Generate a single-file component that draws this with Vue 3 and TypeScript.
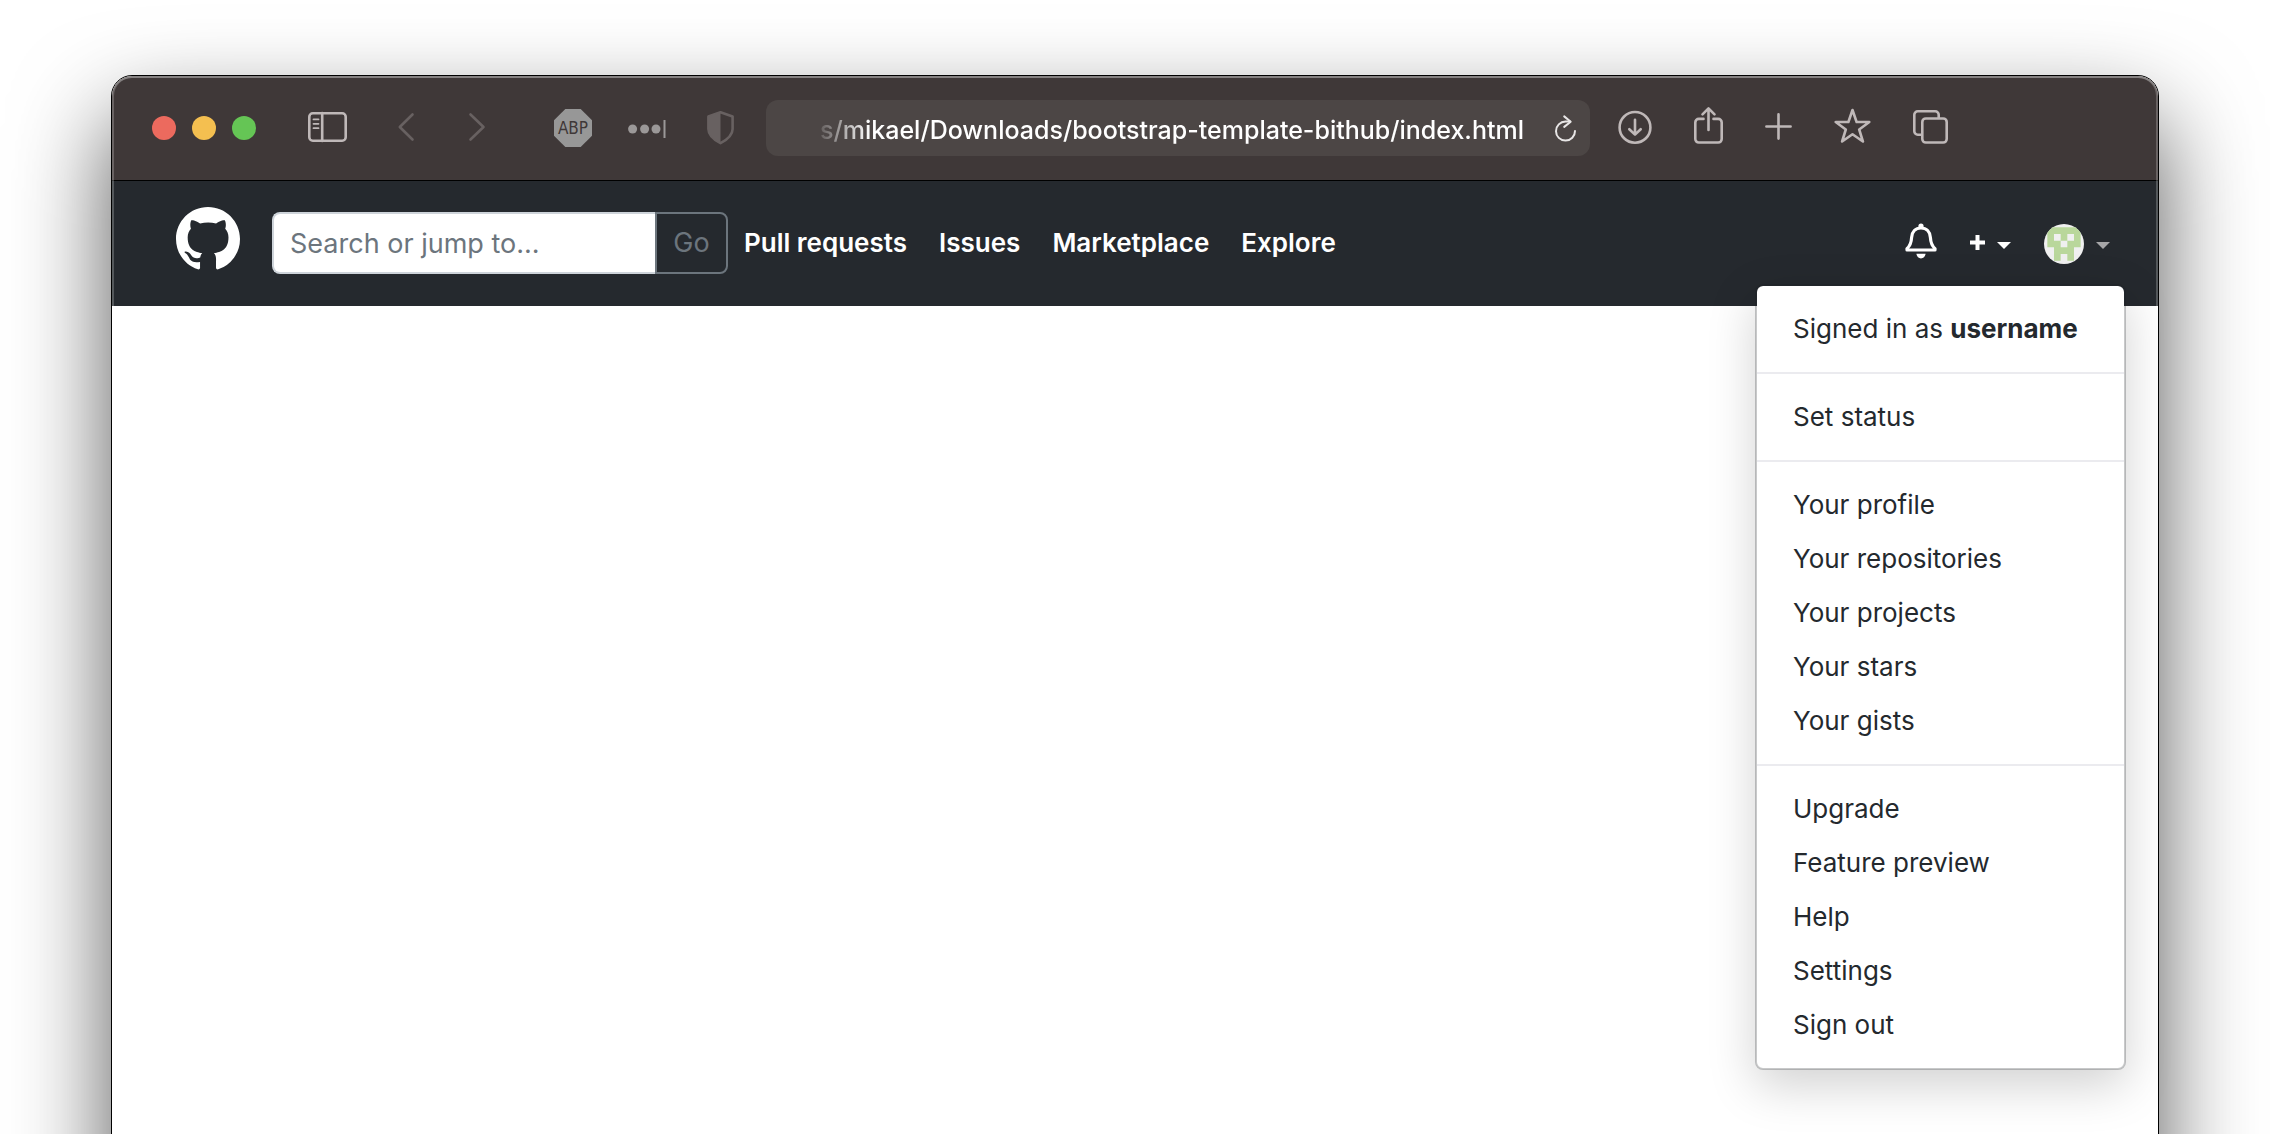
<script setup lang="ts">
import { ref } from 'vue'

interface MenuEntry {
  label: string
  strong?: string
}

const address = ref('s/mikael/Downloads/bootstrap-template-bithub/index.html')
const query = ref('')

const links: string[] = ['Pull requests', 'Issues', 'Marketplace', 'Explore']

const menu: MenuEntry[][] = [
  [{ label: 'Signed in as ', strong: 'username' }],
  [{ label: 'Set status' }],
  [
    { label: 'Your profile' },
    { label: 'Your repositories' },
    { label: 'Your projects' },
    { label: 'Your stars' },
    { label: 'Your gists' },
  ],
  [
    { label: 'Upgrade' },
    { label: 'Feature preview' },
    { label: 'Help' },
    { label: 'Settings' },
    { label: 'Sign out' },
  ],
]
</script>

<template>
  <div class="desktop">
    <div class="window">
      <div class="toolbar">
        <div class="lights">
          <button class="light close" aria-label="Close"></button>
          <button class="light minimise" aria-label="Minimise"></button>
          <button class="light zoom" aria-label="Zoom"></button>
        </div>

        <div class="history">
          <button class="tool" aria-label="Sidebar">
            <svg width="39" height="44" viewBox="0 0 39 44">
              <rect x="1.3" y="7.3" width="36.4" height="27.4" rx="3.5" />
              <path d="M14.2 7v28" />
              <path d="M5.5 13.4h5M5.5 17.8h5M5.5 22.2h5" stroke-width="1.8" />
            </svg>
          </button>
          <button class="tool dim" aria-label="Back">
            <svg width="20" height="44" viewBox="0 0 20 44"><path d="M15.5 8.500 2.800 21l12.700 12.500" /></svg>
          </button>
          <button class="tool dim" aria-label="Forward">
            <svg width="20" height="44" viewBox="0 0 20 44"><path d="M3.5 8.5 16.5 21l-13 12.5" /></svg>
          </button>
        </div>

        <div class="extensions">
          <button class="tool" aria-label="Adblock Plus">
            <svg width="38" height="44" viewBox="0 0 38 44">
              <path class="abp" d="M11.3 3h15.4L38 14.2v15.5L26.7 41H11.3L0 29.7V14.2z" />
              <text class="abp-text" x="19" y="28" text-anchor="middle">ABP</text>
            </svg>
          </button>
          <button class="tool" aria-label="Passwords">
            <svg width="43" height="44" viewBox="0 0 43 44">
              <g class="dots">
                <circle cx="4.6" cy="23" r="4.5" />
                <circle cx="16.6" cy="23" r="4.5" />
                <circle cx="28" cy="23" r="4.5" />
                <rect x="35.5" y="14" width="2" height="18" />
              </g>
            </svg>
          </button>
          <button class="tool dim" aria-label="Privacy report">
            <svg width="27" height="44" viewBox="0 0 27 44">
              <path d="M13.5 6.2 25.6 10.4V23c0 7-6 11-12.1 14.2C7.4 34 1.4 30 1.4 23V10.4z" />
              <path class="half" d="M13.5 6.2v31C7.4 34 1.4 30 1.4 23V10.4z" />
            </svg>
          </button>
        </div>

        <div class="address">
          <input v-model="address" class="address-field" type="text" aria-label="Address" spellcheck="false" />
          <button class="tool reload" aria-label="Reload">
            <svg width="24" height="28" viewBox="0 0 24 28">
              <path d="M16 7.600h-4.500A9.500 9.500 0 1 0 21 17" />
              <path d="m10.200 2.400 6.500 5.300-6.500 5.200" />
            </svg>
          </button>
        </div>

        <div class="actions">
          <button class="tool" aria-label="Downloads">
            <svg width="34" height="44" viewBox="0 0 34 44">
              <circle cx="17" cy="21.4" r="15.4" />
              <path d="M17 13.800v14.600M11.300 23.200l5.700 5.400 5.700-5.400" />
            </svg>
          </button>
          <button class="tool" aria-label="Share">
            <svg width="29" height="44" viewBox="0 0 29 44">
              <path d="M9.500 12.900H4.800a3.500 3.500 0 0 0-3.500 3.500V33a3.500 3.500 0 0 0 3.500 3.500h19.400a3.500 3.500 0 0 0 3.500-3.500V16.400a3.500 3.500 0 0 0-3.500-3.500h-4.700" />
              <path d="M14.500 3v21M8.500 8.400l6-6 6 6" />
            </svg>
          </button>
          <button class="tool" aria-label="New tab">
            <svg width="27" height="44" viewBox="0 0 27 44"><path d="M13.500 8.400v24.200M1.400 20.500h24.200" /></svg>
          </button>
          <button class="tool" aria-label="Bookmarks">
            <svg width="37" height="44" viewBox="0 0 37 44">
              <path d="m18.500 4 4.100 12h12.700l-10.100 7.500 3.700 12-10.400-7.200-10.400 7.200 3.700-12L1.700 16h12.700z" />
            </svg>
          </button>
          <button class="tool" aria-label="Tab overview">
            <svg width="35" height="44" viewBox="0 0 35 44">
              <rect x="9.3" y="12.5" width="24.4" height="24" rx="3.5" />
              <path d="M8.500 28.700H4.800a3.500 3.500 0 0 1-3.500-3.500V8.800a3.500 3.500 0 0 1 3.500-3.500h17.400a3.500 3.500 0 0 1 3.500 3.500v3" />
            </svg>
          </button>
        </div>
      </div>

      <header class="navbar">
        <a class="brand" href="#" aria-label="Home">
          <svg width="64" height="64" viewBox="0 0 16 16">
            <path d="M8 0C3.580 0 0 3.580 0 8c0 3.540 2.290 6.530 5.470 7.590.4.070.55-.170.55-.380 0-.190-.010-.820-.010-1.490-2.010.370-2.530-.490-2.690-.940-.090-.230-.480-.940-.820-1.130-.280-.150-.680-.520-.010-.530.630-.010 1.080.580 1.230.820.720 1.210 1.870.870 2.330.660.070-.520.280-.870.510-1.070-1.780-.200-3.640-.890-3.640-3.950 0-.870.310-1.590.820-2.150-.080-.200-.360-1.020.080-2.120 0 0 .670-.210 2.200.820.640-.180 1.320-.270 2-.270s1.360.090 2 .270c1.530-1.040 2.200-.820 2.200-.820.440 1.100.160 1.920.080 2.120.510.560.820 1.270.820 2.150 0 3.070-1.870 3.750-3.650 3.950.290.250.540.730.540 1.480 0 1.070-.010 1.930-.010 2.200 0 .210.150.460.550.380A8.010 8.010 0 0 0 16 8c0-4.420-3.580-8-8-8z" />
          </svg>
        </a>
        <form class="search" @submit.prevent>
          <input v-model="query" class="search-field" type="search" placeholder="Search or jump to..." aria-label="Search or jump to" />
          <button class="search-go" type="submit">Go</button>
        </form>
        <nav class="links">
          <a v-for="link in links" :key="link" href="#">{{ link }}</a>
        </nav>
        <div class="account">
          <a class="bell" href="#" aria-label="Notifications">
            <svg width="32" height="42" viewBox="0 0 32 42">
              <path class="outline" d="M16 6C10.400 6 7 10 6.600 15.500 6.300 21 5 24 2 26.600v1.400h28v-1.400c-3-2.600-4.300-5.600-4.600-11.100C25 10 21.600 6 16 6z" />
              <circle cx="16" cy="4" r="2.6" />
              <path d="M11.400 31.800h9.200c-.4 2.800-2.200 4.600-4.600 4.600s-4.200-1.800-4.600-4.600z" />
            </svg>
          </a>
          <button class="toggle" aria-label="Create new">
            <svg width="15" height="42" viewBox="0 0 15 42"><path d="M5.500 13h4v5.500H15v4H9.500V28h-4v-5.500H0v-4h5.500z" /></svg>
            <svg width="14" height="42" viewBox="0 0 14 42"><path d="M0 20h14l-7 7z" /></svg>
          </button>
          <button class="toggle" aria-label="Account menu" aria-expanded="true">
            <svg width="40" height="42" viewBox="0 -6 120 126">
              <defs>
                <clipPath id="avatar-round"><circle cx="60" cy="60" r="60" /></clipPath>
              </defs>
              <g clip-path="url(#avatar-round)">
                <path fill="#f0f0f0" d="M0 0h120v120H0z" />
                <path fill="#b9d79b" fill-rule="evenodd" d="M10 10h100v60H90v40H70V90H50v20H30V70H10zM30 30v20h20V30zM70 30v20h20V30zM50 50v20h20V50z" />
              </g>
            </svg>
            <svg class="faded" width="14" height="42" viewBox="0 0 14 42"><path d="M0 20h14l-7 7z" /></svg>
          </button>
        </div>

        <div class="menu">
          <ul v-for="(section, i) in menu" :key="i" class="section">
            <li v-for="entry in section" :key="entry.label">
              <a href="#">{{ entry.label }}<strong v-if="entry.strong">{{ entry.strong }}</strong></a>
            </li>
          </ul>
        </div>
      </header>
    </div>
  </div>
</template>

<style>
body {
  margin: 0;
  background: #fff;
}
</style>

<style scoped>
.desktop,
.desktop * {
  box-sizing: border-box;
}

.desktop {
  height: 100vh;
  overflow: hidden;
  padding: 75px 111px 0;
  background: #fff;
  font-family: Inter, "Liberation Sans", sans-serif;
  font-size: 26px;
}

button,
input {
  margin: 0;
  padding: 0;
  border: 0;
  background: none;
  font: inherit;
  color: inherit;
}

a {
  color: inherit;
  text-decoration: none;
}

svg {
  display: block;
}

.window {
  position: relative;
  min-height: 125vh;
  border: 1px solid #000;
  border-radius: 21px;
  background: #fff;
  box-shadow: 0 44px 96px rgba(0, 0, 0, 0.66);
}

.window::after {
  content: "";
  position: absolute;
  inset: 0;
  border-radius: 20px;
  box-shadow: inset 0 0 0 2px rgba(255, 255, 255, 0.22), inset 0 2px 0 rgba(255, 255, 255, 0.2);
  pointer-events: none;
}

.toolbar {
  display: flex;
  align-items: center;
  height: 105px;
  padding: 0 210px 0 40px;
  border-bottom: 1px solid #000;
  border-radius: 20px 20px 0 0;
  background: #3f3838;
}

.lights {
  display: flex;
  gap: 16px;
}

.light {
  width: 24px;
  height: 24px;
  border-radius: 50%;
}

.close {
  background: #ec6a5e;
}

.minimise {
  background: #f4bf50;
}

.zoom {
  background: #65c555;
}

.tool {
  flex: none;
}

.tool svg {
  fill: none;
  stroke: #bfb8b8;
  stroke-width: 2.6;
  stroke-linecap: round;
  stroke-linejoin: round;
}

.dim svg {
  stroke: #686161;
}

.history {
  display: flex;
  gap: 50px;
  margin-left: 52px;
}

.extensions {
  display: flex;
  gap: 36px;
  margin-left: 67px;
}

.tool .abp {
  fill: #979797;
  stroke: none;
}

.tool .abp-text {
  fill: #3f3838;
  stroke: none;
  font-family: "DejaVu Sans Condensed", "Open Sans", sans-serif;
  font-size: 17px;
  font-weight: 500;
}

.tool .dots {
  fill: #9b9898;
  stroke: none;
}

.tool .half {
  fill: #686161;
  stroke: none;
}

.address {
  display: flex;
  flex: 1;
  align-items: center;
  gap: 30px;
  min-width: 0;
  height: 56px;
  margin: 0 28px 0 32px;
  padding: 0 12px 0 52px;
  border-radius: 12px;
  background: #4c4645;
}

.address-field {
  flex: 1;
  min-width: 0;
  height: 56px;
  padding-top: 3px;
  color: #fff;
  font-size: 25px;
  font-weight: 500;
  text-align: right;
  outline: 0;
  -webkit-mask-image: linear-gradient(to right, rgba(0, 0, 0, 0.1), #000 52px);
  mask-image: linear-gradient(to right, rgba(0, 0, 0, 0.1), #000 52px);
}

.reload svg {
  stroke: #e8e6e6;
  stroke-width: 2;
}

.actions {
  display: flex;
  gap: 42px;
}

.navbar {
  position: relative;
  display: flex;
  align-items: center;
  height: 125px;
  padding: 0 48px 2px 64px;
  background: #25292e;
  color: #fff;
}

.brand {
  margin-bottom: 8px;
}

.brand svg,
.account svg {
  fill: #fff;
}

.search {
  display: flex;
  margin: 0 16px 0 32px;
  font-size: 27px;
}

.search-field {
  width: 383px;
  height: 62px;
  padding: 2px 16px 0;
  border: 2px solid #ced4da;
  border-right: 0;
  border-radius: 8px 0 0 8px;
  background: #fff;
  color: #495057;
  outline: 0;
  appearance: none;
}

.search-field::placeholder {
  color: #6c757d;
  opacity: 1;
}

.search-go {
  width: 73px;
  height: 62px;
  border: 2px solid #6c757d;
  border-radius: 0 8px 8px 0;
  color: #6c757d;
}

.links {
  display: flex;
  gap: 32px;
  font-weight: 600;
}

.account {
  display: flex;
  align-items: center;
  gap: 33px;
  margin-left: auto;
}

.toggle {
  display: flex;
  gap: 12px;
}

.account .outline {
  fill: none;
  stroke: #fff;
  stroke-width: 3.2;
  stroke-linejoin: round;
}

.account .faded {
  fill: #a6a6a8;
}

.menu {
  position: absolute;
  top: 103px;
  right: 32px;
  z-index: 1;
  width: 371px;
  border: 2px solid rgba(27, 31, 35, 0.24);
  border-radius: 8px;
  background: #fff;
  background-clip: padding-box;
  box-shadow: 0 16px 48px rgba(0, 0, 0, 0.18);
  color: #24292e;
}

.section {
  margin: 0;
  padding: 16px 0;
  list-style: none;
}

.section + .section {
  border-top: 2px solid #ebebef;
}

.section a {
  display: block;
  padding: 0 36px;
  line-height: 54px;
  white-space: nowrap;
}

.section strong {
  font-weight: 700;
}
</style>
